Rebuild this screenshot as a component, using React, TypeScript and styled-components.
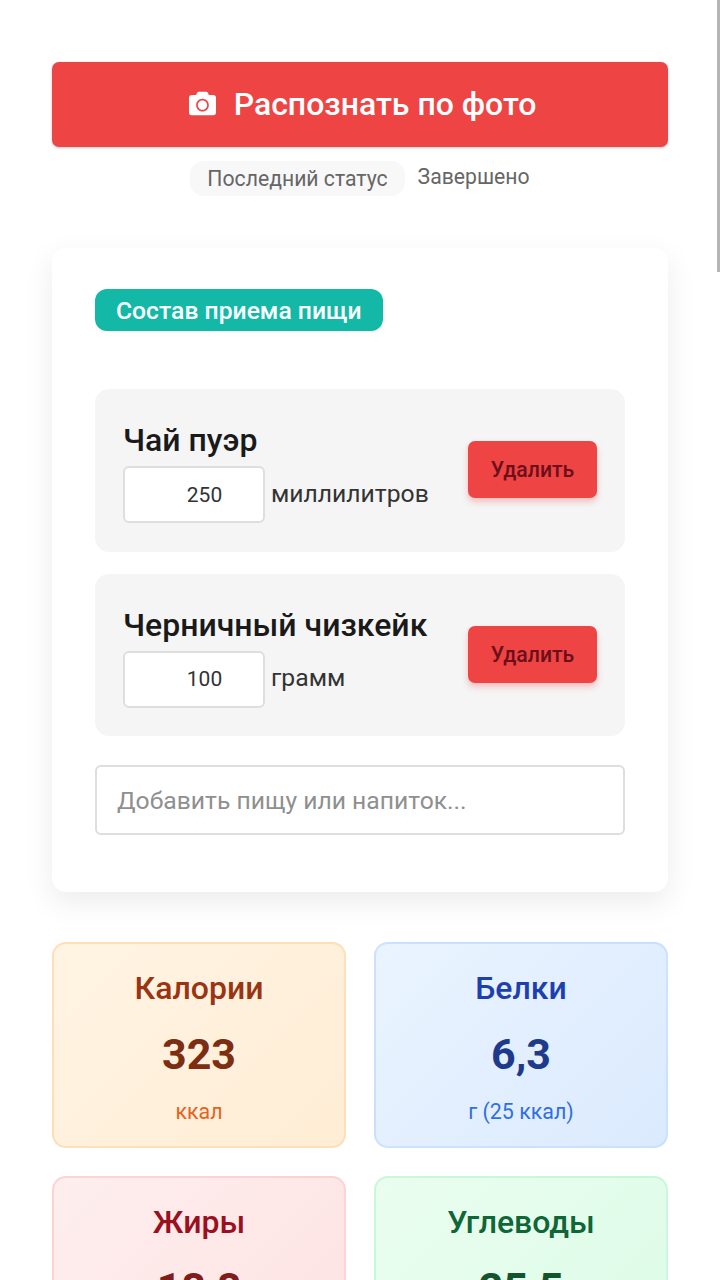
import styled, { createGlobalStyle } from 'styled-components';
import { FaCamera } from 'react-icons/fa';

const GlobalStyle = createGlobalStyle`
  html, body {
    margin: 0;
    height: 1280px;
    overflow: hidden;
    background: #fff;
    font-family: Roboto, "Noto Sans", sans-serif;
  }
`;

const Page = styled.main`
  box-sizing: border-box;
  padding: 62px 52px 0;
`;

const PhotoButton = styled.button`
  align-items: center;
  background: #ef4444;
  border: none;
  border-radius: 7px;
  box-shadow: 0 1px 3px rgba(0, 0, 0, 0.2);
  color: #fff;
  display: flex;
  font-family: inherit;
  font-size: 32px;
  font-weight: 500;
  gap: 18px;
  height: 85px;
  justify-content: center;
  padding: 0 0 2px 5px;
  width: 100%;
`;

const StatusRow = styled.div`
  align-items: flex-start;
  color: #666;
  display: flex;
  font-size: 21.2px;
  gap: 13px;
  justify-content: center;
  margin-top: 14px;
`;

const StatusLabel = styled.span`
  background: #f8f8f8;
  border-radius: 14px;
  line-height: 35px;
  padding: 0 17px;
`;

const StatusValue = styled.span`
  line-height: 32px;
`;

const MealCard = styled.section`
  background: #fff;
  border-radius: 14px;
  box-shadow: 0 10px 30px rgba(0, 0, 0, 0.08);
  margin-top: 52px;
  padding: 41px 43px 57px;
`;

const Badge = styled.div`
  background: #14b8a6;
  border-radius: 12px;
  color: #fff;
  display: inline-block;
  font-size: 24.7px;
  font-weight: 500;
  height: 42px;
  line-height: 44px;
  padding: 0 21px;
`;

const ItemList = styled.div`
  display: flex;
  flex-direction: column;
  gap: 22px;
  margin-top: 58px;
`;

const Item = styled.div`
  align-items: center;
  background: #f5f5f5;
  border-radius: 14px;
  display: flex;
  height: 162.5px;
  justify-content: space-between;
  padding: 0 28px;
`;

const ItemInfo = styled.div`
  padding-top: 5px;
`;

const ItemName = styled.div`
  color: #1a1a1a;
  font-size: 32px;
  font-weight: 500;
  line-height: 36px;
`;

const AmountRow = styled.div`
  align-items: center;
  color: #333;
  display: flex;
  font-size: 24.7px;
  gap: 6px;
  margin-top: 8px;
`;

const AmountInput = styled.input`
  background: #fff;
  border: 2px solid #dedede;
  border-radius: 6px;
  box-sizing: border-box;
  color: #333;
  font-family: inherit;
  font-size: 21px;
  height: 57px;
  padding: 0 0 0 36px;
  text-align: center;
  width: 142px;
`;

const AmountUnit = styled.span`
  margin-bottom: 3px;
`;

const DeleteButton = styled.button`
  background: #ef4444;
  border: none;
  border-radius: 7px;
  box-shadow: 0 4px 6px rgba(239, 68, 68, 0.3);
  color: #6b0f1a;
  font-family: inherit;
  font-size: 21.2px;
  font-weight: 500;
  height: 57px;
  margin-bottom: 1px;
  width: 129px;
`;

const AddInput = styled.input`
  border: 2px solid #dedede;
  border-radius: 6px;
  box-sizing: border-box;
  display: block;
  font-family: inherit;
  font-size: 24.7px;
  height: 70px;
  margin-top: 29px;
  padding: 0 20px;
  width: 100%;

  &::placeholder {
    color: #8f8f8f;
    opacity: 1;
  }
`;

const StatGrid = styled.div`
  display: grid;
  gap: 28px;
  grid-template-columns: 1fr 1fr;
  margin-top: 50px;
`;

const StatCard = styled.div<{ $from: string; $to: string; $border: string }>`
  background: linear-gradient(135deg, ${(p) => p.$from}, ${(p) => p.$to});
  border: 2px solid ${(p) => p.$border};
  border-radius: 14px;
  box-sizing: border-box;
  height: 206px;
  padding-top: 24px;
  text-align: center;
`;

const StatTitle = styled.div<{ $color: string }>`
  color: ${(p) => p.$color};
  font-size: 32px;
  font-weight: 500;
  line-height: 40px;
`;

const StatValue = styled.div<{ $color: string }>`
  color: ${(p) => p.$color};
  font-size: 43px;
  font-weight: 700;
  line-height: 50px;
  margin-top: 21px;
`;

const StatUnit = styled.div<{ $color: string }>`
  color: ${(p) => p.$color};
  font-size: 21.4px;
  line-height: 28px;
  margin-top: 19px;
`;

const ScrollThumb = styled.div`
  background: #b5b5b5;
  height: 272px;
  position: fixed;
  right: 0;
  top: 0;
  width: 3px;
`;

const stats = [
  { title: 'Калории', value: '323', unit: 'ккал', from: '#fff4e3', to: '#ffedd5', border: '#fed7aab0', titleColor: '#9a3412', valueColor: '#7c2d12', unitColor: '#e8621c' },
  { title: 'Белки', value: '6,3', unit: 'г (25 ккал)', from: '#eaf4ff', to: '#dbeafe', border: '#bfdbfeb0', titleColor: '#1e40af', valueColor: '#1e3a8a', unitColor: '#2f6fe4' },
  { title: 'Жиры', value: '18,8', unit: 'г (169 ккал)', from: '#feeeee', to: '#fee2e2', border: '#fecacab0', titleColor: '#9b1020', valueColor: '#7f1d1d', unitColor: '#dc2626' },
  { title: 'Углеводы', value: '25,5', unit: 'г (102 ккал)', from: '#eafdef', to: '#dcfce7', border: '#bbf7d0b0', titleColor: '#0f6636', valueColor: '#14532d', unitColor: '#16a34a' },
];

const items = [
  { name: 'Чай пуэр', amount: 250, unit: 'миллилитров' },
  { name: 'Черничный чизкейк', amount: 100, unit: 'грамм' },
];

const App = () => (
  <Page>
    <GlobalStyle />
    <PhotoButton>
      <FaCamera size={27} />
      Распознать по фото
    </PhotoButton>
    <StatusRow>
      <StatusLabel>Последний статус</StatusLabel>
      <StatusValue>Завершено</StatusValue>
    </StatusRow>
    <MealCard>
      <Badge>Состав приема пищи</Badge>
      <ItemList>
        {items.map((item) => (
          <Item key={item.name}>
            <ItemInfo>
              <ItemName>{item.name}</ItemName>
              <AmountRow>
                <AmountInput type='number' defaultValue={item.amount} />
                <AmountUnit>{item.unit}</AmountUnit>
              </AmountRow>
            </ItemInfo>
            <DeleteButton>Удалить</DeleteButton>
          </Item>
        ))}
      </ItemList>
      <AddInput placeholder='Добавить пищу или напиток...' />
    </MealCard>
    <StatGrid>
      {stats.map((s) => (
        <StatCard key={s.title} $from={s.from} $to={s.to} $border={s.border}>
          <StatTitle $color={s.titleColor}>{s.title}</StatTitle>
          <StatValue $color={s.valueColor}>{s.value}</StatValue>
          <StatUnit $color={s.unitColor}>{s.unit}</StatUnit>
        </StatCard>
      ))}
    </StatGrid>
    <ScrollThumb />
  </Page>
);

export default App;
